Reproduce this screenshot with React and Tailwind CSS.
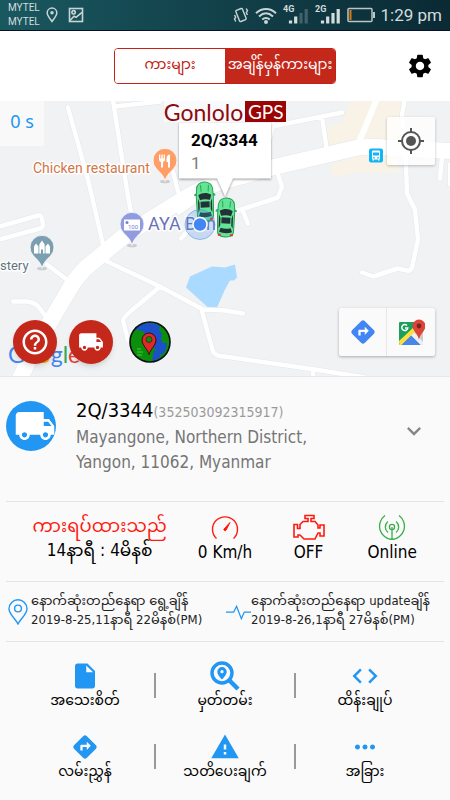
import {
  MdCode,
  MdDirections,
  MdExpandMore,
  MdHelpOutline,
  MdInsertDriveFile,
  MdLocalShipping,
  MdMoreHoriz,
  MdSettings,
  MdWarning,
} from "react-icons/md";

const actions = [
  [
    { label: "အသေးစိတ်", icon: <MdInsertDriveFile className="h-[30px] w-[30px]" /> },
    { label: "မှတ်တမ်း", icon: <SearchPinIcon /> },
    { label: "ထိန်းချုပ်", icon: <MdCode className="h-[30px] w-[30px]" /> },
  ],
  [
    { label: "လမ်းညွှန်", icon: <MdDirections className="h-7 w-7" /> },
    { label: "သတိပေးချက်", icon: <MdWarning className="h-[30px] w-[30px]" /> },
    { label: "အခြား", icon: <MdMoreHoriz className="h-[30px] w-[30px]" /> },
  ],
];

// narrow streets and the main road, drawn twice (casing + fill)
const lanes =
  "M68 108l20 72 12 52 7 30M113 101l14 90 8 44M115 107l45-5M-4 228l42-12q3-1 4 3l1 6q0 3-3 4L-4 241M47 265l21 16M13 302h14q9 1 13 7l10 14M107 262l53 25 43 23 22 1 18 3M160 287l-20 17q-18 14-17 17l5 20M202 312l11 40q3 5 12 5l90 13 50 8M313 372v8M173 172l5 20M272 127l70-14M273 125l-5 20M322 117l5 35M405 99l-3 16 4 50 1 29 8 16 3 30-6 28q-2 4-5 3l-9-2-25 8-11-4M278 175l4 12-4 11-43 14M243 212l5 12M442 158l-2 21M450 165v20M181 239l13-15M193 203l-14 10";
const mainRoad =
  "m17 385 18-37 33-56q6-11 17-23l41-34 55-34q25-16 60-24l31-9 86-20 10-1 90 5";

function SearchPinIcon() {
  return (
    <svg viewBox="0 0 30 30" className="h-[30px] w-[30px]" fill="none" aria-hidden="true">
      <circle cx="12" cy="12" r="10" stroke="currentColor" strokeWidth="3.4" />
      <path d="M19.5 19.5 28 28" stroke="currentColor" strokeWidth="4.4" />
      <path
        fill="currentColor"
        fillRule="evenodd"
        d="M12 6a4.7 4.7 0 0 0-4.7 4.7C7.3 14 12 18.4 12 18.4s4.7-4.4 4.7-7.7A4.7 4.7 0 0 0 12 6Zm0 3.1a1.6 1.6 0 1 1 0 3.2 1.6 1.6 0 0 1 0-3.2Z"
      />
    </svg>
  );
}

function SignalIcon({ label, dim }) {
  return (
    <svg viewBox="0 0 26 22" className="h-[22px] w-[26px]" aria-hidden="true">
      <text x="0" y="8" fontSize="9" fontWeight="700" fontFamily="Roboto, sans-serif" fill="#d3dcde">
        {label}
      </text>
      <path stroke="#d3dcde" strokeWidth="3.2" d="M7.5 19.5v-3M12.7 19.5v-7" />
      <path stroke="#d3dcde" strokeWidth="3.2" opacity={dim ? 0.25 : 1} d="M18 19.5V9M23.2 19.5V5" />
    </svg>
  );
}

function StatusBar() {
  return (
    <div className="flex h-[31px] items-center justify-between border-b border-[#06122b] bg-linear-to-r from-[#1a5860] to-[#0a2a34] px-2 font-['Roboto',sans-serif] text-[#d3dcde]">
      <div className="flex items-center gap-[6px]">
        <div className="text-[10px] leading-[14px]">
          <p>MYTEL</p>
          <p>MYTEL</p>
        </div>
        <svg viewBox="0 0 12 16" className="h-4 w-3" fill="none" stroke="#c9d4d6" strokeWidth="1.5" aria-hidden="true">
          <path d="M6 14.5C4 11.5 1.2 9 1.2 5.8a4.8 4.8 0 0 1 9.6 0c0 3.2-2.8 5.7-4.8 8.7Z" />
          <circle cx="6" cy="5.8" r="1" fill="#c9d4d6" />
        </svg>
        <svg viewBox="0 0 16 16" className="ml-1 h-4 w-4" fill="none" stroke="#c9d4d6" strokeWidth="1.6" aria-hidden="true">
          <rect x="1.5" y="1.5" width="13" height="13" />
          <circle cx="5.6" cy="5.3" r="1.7" />
          <path d="m2 13.5 4-4.2 2 1 6-5" />
        </svg>
      </div>
      <div className="flex items-center gap-[6px]">
        <svg viewBox="0 0 16 18" className="h-[18px] w-4" fill="none" stroke="#c9d4d6" strokeWidth="1.4" aria-hidden="true">
          <rect x="4.5" y="3" width="7" height="12" rx="1" transform="rotate(-22 8 9)" />
          <path d="m1.5 9 1.2 2.2L1.5 13l1.3 2.5M13.2 2.5l1.3 2.3-1.2 1.9L14.5 9" />
        </svg>
        <svg viewBox="0 0 22 17" className="h-[17px] w-[22px]" fill="none" stroke="#c9d4d6" strokeWidth="2" aria-hidden="true">
          <path d="M1 6.2c6-5.6 14-5.6 20 0M4 9.5c4.4-4 9.6-4 14 0M7.2 12.6c2.4-2 5.2-2 7.6 0" />
          <circle cx="11" cy="15" r="1" fill="#c9d4d6" />
        </svg>
        <SignalIcon label="4G" dim />
        <SignalIcon label="2G" />
        <svg viewBox="0 0 28 16" className="h-4 w-7" aria-hidden="true">
          <rect x="1" y="1.5" width="24" height="13" rx="1" fill="none" stroke="#b9c5c8" strokeWidth="1.5" />
          <path fill="#b9c5c8" d="M26 5h2v6h-2z" />
          <path fill="#d9790d" d="M2.5 3h2v10h-2z" />
        </svg>
        <span className="text-[17px] leading-6">1:29 pm</span>
      </div>
    </div>
  );
}

function Header() {
  return (
    <header className="grid h-[70px] grid-cols-[1fr_auto_1fr] items-center bg-white">
      <div className="col-start-2 grid w-[222px] grid-cols-2 overflow-hidden rounded border border-[#c62116] text-[14px] leading-[30px]">
        <button className="h-[34px] bg-white pb-1 text-[#c01a10]">ကားများ</button>
        <button className="h-[34px] bg-[#c4281b] pb-1 whitespace-nowrap text-white">အချိန်မှန်ကားများ</button>
      </div>
      <button aria-label="Settings" className="mr-4 justify-self-end">
        <MdSettings className="h-7 w-7 text-black" />
      </button>
    </header>
  );
}

function Car({ x, y, angle }) {
  return (
    <g transform={`translate(${x} ${y}) rotate(${angle})`}>
      <path fill="#2fae60" d="M-10.5-7.5-7-9v3l-3.5.5ZM10.5-7.5 7-9v3l3.5.5Z" />
      <path
        fill="#62e595"
        stroke="#2c9c57"
        strokeWidth="1"
        d="M-8-13c0-4 4-6.5 8-6.5s8 2.5 8 6.5l.5 8L8 14c0 4-3 5.5-8 5.5S-8 18-8 14l-.5-19Z"
      />
      <path fill="#243238" d="M-6.5-6.5c4-2.5 9-2.5 13 0L5-1.5c-3-1-7-1-10 0Z" />
      <path fill="#243238" d="M-7-3-5.5 1v7L-7 11ZM7-3 5.5 1v7L7 11ZM-4.5 0h9v6h-9ZM-5 10.5c3 1 7 1 10 0l1.5 4c-4 1.500-9 1.500-13 0Z" />
      <path fill="none" stroke="#2fa35b" d="M-4-16.500-3.500-10M4-16.500 3.500-10" />
      <path stroke="#d83a2c" strokeWidth="2" d="M-7.500 17.500h3M4.500 17.500h3" />
    </g>
  );
}

function MapPin({ x, y, color, children }) {
  return (
    <g transform={`translate(${x} ${y})`}>
      <ellipse cy="21" rx="5" ry="1.8" fill="#c9ccd0" />
      <path fill={color} stroke="#fff" strokeWidth=".8" d="M0 21C-1.500 14-6 11.500-8.800 8A12 12 0 1 1 8.800 8C6 11.500 1.500 14 0 21Z" />
      {children}
    </g>
  );
}

function MapCanvas() {
  return (
    <svg
      viewBox="0 101 450 276"
      preserveAspectRatio="xMidYMid slice"
      className="h-full w-full bg-[#f1f2f4]"
      fontFamily="Roboto, sans-serif"
      role="img"
      aria-label="Map"
    >
      <path fill="#f8f3e6" d="M351 101h53l-1 45-45-4-30 8-1-22 15-5ZM330 165l28-9h40v17h-40l-25 5Z" />
      <path fill="#aadaff" d="m190 277 22-10 13 1 10-3 2 13-3 3h-4l-5 9-8 18h-9l-22-20Z" />

      <g fill="none" strokeLinecap="round" strokeLinejoin="round">
        <path d={lanes} stroke="#e4e6e9" strokeWidth="5.5" />
        <path d={mainRoad} stroke="#e4e6e9" strokeWidth="17" />
        <path d={lanes} stroke="#fff" strokeWidth="4.5" />
        <path d="m377 99-19 46" stroke="#fff" strokeWidth="6" />
        <path d={mainRoad} stroke="#fff" strokeWidth="16" />
      </g>

      {/* places */}
      <g stroke="#fff" strokeWidth="3" paintOrder="stroke" strokeLinejoin="round">
        <text x="33" y="173" fontSize="14" fill="#d27749">Chicken restaurant</text>
        <text x="0" y="270" fontSize="13" fill="#60747f">stery</text>
        <text x="148" y="230" fontSize="18" fill="#6a73b7">AYA Bank</text>
      </g>
      <MapPin x={165} y={161} color="#ff9e67">
        <path fill="#fff" d="M-6-6h1.300v4h1V-6h1.400v4h1V-6H0v5q0 2-2 2.500V7h-2V1.500Q-6 1-6-1ZM5-6V7H3V1.500H1.500V-2Q2-6 5-6Z" />
      </MapPin>
      <MapPin x={132} y={225} color="#909be0">
        <rect x="-8" y="-5" width="16" height="11" fill="#fff" />
        <circle cx="-5" cy="-2" r="1.5" fill="#7781d0" />
        <text x="-4" y="4" fontSize="6" fill="#7781d0">100</text>
      </MapPin>
      <MapPin x={42} y={248} color="#7b9eb0">
        <path fill="#fff" d="M-8 6V-1l2-3 2.500 3V6ZM8 6V-1L6-4 3.500-1V6ZM-2.700 6v-9L0-7l2.700 4v9H1V2h-2v4Z" />
      </MapPin>
      <g transform="translate(369 149)">
        <rect width="14" height="14" rx="2" fill="#12b5f5" />
        <path fill="#fff" fillRule="evenodd" d="M4 2h6q1 0 1 1v7l-.5.500V12H9v-1H5v1H3.500v-1.500L3 10V3q0-1 1-1Zm0 2v3h6V4ZM4.200 8.500V10h1.500V8.500Zm4.100 0V10h1.500V8.500Z" />
      </g>

      <Car x={205} y={202} angle={-2} />
      <circle cx="200" cy="225" r="15" fill="#4a90e2" fillOpacity=".25" stroke="#4a90e2" strokeOpacity=".55" />
      <circle cx="200" cy="225" r="7" fill="#4285f4" stroke="#fff" strokeWidth="1.5" />
      <Car x={226} y={218} angle={2} />

      {/* marker bubble */}
      <path fill="#fff" className="drop-shadow-[0_1px_1px_rgb(0_0_0/0.4)]" d="M179 123h92v56h-38l-8 18-8-18h-38Z" />
      <text x="191" y="146" fontSize="17" fontWeight="700" fill="#000">2Q/3344</text>
      <text x="191" y="169" fontSize="17" fill="#7d7d7d">1</text>
    </svg>
  );
}

function Globe() {
  return (
    <svg viewBox="0 0 42 42" className="h-[42px] w-[42px]" aria-hidden="true">
      <circle cx="21" cy="21" r="20" fill="#0b8f0b" />
      <path fill="#1c4fc9" d="M10 5Q20-1 31 5l-1 4 3 4-1 5 2 4h4q0 7-5 12l-5-4-5-6-5-6-4-8-7-1-1-3Z" />
      <path fill="#1c4fc9" d="m25 29 5 2 2 5q-4 3-9 4Z" />
      <path stroke="#43c943" strokeWidth="1" d="M8 28h4M8 31h6M8 34h5" />
      <circle cx="21" cy="21" r="20" fill="none" stroke="#0a0f14" strokeWidth="1.6" />
      <path
        fill="#e0282b"
        stroke="#3b0a0a"
        strokeWidth="1"
        d="M20 33.500c-1-5-7-9-7-14.500a7 7 0 0 1 14 0c0 5.500-6 9.500-7 14.500Z"
      />
      <circle cx="20" cy="18.5" r="3" fill="#0b8f0b" stroke="#3b0a0a" strokeWidth=".6" />
    </svg>
  );
}

function GoogleMapsIcon() {
  return (
    <svg viewBox="0 0 28 28" className="h-7 w-7" aria-hidden="true">
      <path fill="#1a9f5c" d="M3 4h19v6L3 27q-1-1-1-2V5q0-1 1-1Z" />
      <path fill="#c9cbce" d="M22 8 16 14l9 13q1-1 1-2V8Z" />
      <path fill="#4a86e8" d="m14 17 10 10H4Z" />
      <path fill="#f0f0f0" d="m14 17 3-3 9 10v2l-2 1Z" />
      <path fill="#ffdf3d" d="M2 23 17 9l3 3L4 27q-2 0-2-4Z" />
      <path fill="none" stroke="#fff" strokeWidth="1.5" d="M10 7.500a3 3 0 1 0 .8 2.500H8" />
      <path fill="#db4437" d="M22 22c-.5-6-6.500-9-6.500-14a6.500 6.500 0 0 1 13 0c0 5-6 8-6.500 14Z" />
      <circle cx="22" cy="8" r="2.4" fill="#7b231c" />
    </svg>
  );
}

function MapSection() {
  return (
    <section className="relative h-[276px] border-b border-gray-200 font-['Roboto',sans-serif]">
      <MapCanvas />
      <div className="absolute top-0 left-0 flex h-[45px] w-11 items-center justify-center bg-[#fafafa]/90 pb-1 font-['Noto_Sans',sans-serif] text-[18px] text-[#2196f3]">
        0 s
      </div>
      <div className="absolute inset-x-0 top-0 flex justify-center">
        <div className="flex h-[21px] items-center gap-[2px] bg-white/60 font-['Lato',sans-serif] text-[23px] leading-7 text-[#8f0a0d]">
          <span>Gonlolo</span>
          <span className="flex h-[21px] w-[41px] items-center justify-center bg-[#990505] text-[19px] text-white">GPS</span>
        </div>
      </div>
      <button
        aria-label="My location"
        className="absolute top-4 right-[15px] flex h-12 w-12 items-center justify-center rounded-xs bg-white/80 shadow-[0_1px_3px_rgb(0_0_0/0.25)]"
      >
        <svg viewBox="0 0 26 26" className="h-[26px] w-[26px]" fill="none" stroke="#555" strokeWidth="2" aria-hidden="true">
          <circle cx="13" cy="13" r="9" />
          <circle cx="13" cy="13" r="5" fill="#555" stroke="none" />
          <path d="M13 0v4M13 22v4M0 13h4M22 13h4" />
        </svg>
      </button>
      <div className="absolute right-[15px] bottom-5 flex divide-x divide-gray-200 rounded-xs bg-[#fafafa] shadow-[0_1px_3px_rgb(0_0_0/0.3)]">
        <button aria-label="Directions" className="flex h-12 w-12 items-center justify-center">
          <MdDirections className="h-7 w-7 text-[#4285f4]" />
        </button>
        <button aria-label="Open in Google Maps" className="flex h-12 w-12 items-center justify-center">
          <GoogleMapsIcon />
        </button>
      </div>
      <p className="absolute bottom-2 left-2 font-['Lato',sans-serif] text-[23px] leading-7 text-[#4285f4]">
        G<span className="text-[#ea4335]">o</span>
        <span className="text-[#fbbc05]">o</span>g<span className="text-[#34a853]">l</span>
        <span className="text-[#ea4335]">e</span>
      </p>
      <div className="absolute bottom-3 left-[13px] flex items-center gap-3">
        <button aria-label="Help" className="flex h-11 w-11 items-center justify-center rounded-full bg-[#c4281b] shadow-md">
          <MdHelpOutline className="h-[30px] w-[30px] text-white" />
        </button>
        <button aria-label="Vehicles" className="flex h-11 w-11 items-center justify-center rounded-full bg-[#c4281b] shadow-md">
          <MdLocalShipping className="h-[26px] w-[26px] text-white" />
        </button>
        <button aria-label="Map type" className="ml-1">
          <Globe />
        </button>
      </div>
    </section>
  );
}

function VehicleInfo() {
  return (
    <section className="flex h-[124px] items-start gap-5 px-[6px] pt-5">
      <div className="mt-1 flex h-[50px] w-[50px] shrink-0 items-center justify-center rounded-full bg-[#2196f3]">
        <MdLocalShipping className="ml-2 h-[42px] w-[42px] text-white" />
      </div>
      <div className="flex-1">
        <h1 className="text-[20px] leading-[26px] text-black">
          2Q/3344<span className="text-[14px] text-[#9a9a9a]">(352503092315917)</span>
        </h1>
        <p className="max-w-[260px] text-[17px] leading-[25px] text-[#757575]">
          Mayangone, Northern District, Yangon, 11062, Myanmar
        </p>
      </div>
      <button aria-label="Show more" className="mt-5 mr-4">
        <MdExpandMore className="h-7 w-7 text-[#888]" />
      </button>
    </section>
  );
}

function Stats() {
  return (
    <section className="mx-[6px] grid h-20 grid-cols-5 border-t border-[#e4e4e4] px-[10px] pt-3 text-center text-[17px] leading-[24px] text-black">
      <div className="col-span-2">
        <p className="text-[18px] text-[#ff1a10]">ကားရပ်ထားသည်</p>
        <p>14နာရီ : 4မိနစ်</p>
      </div>
      <div className="flex flex-col items-center">
        <svg viewBox="0 0 28 26" className="h-[26px] w-7" fill="none" stroke="#ff1a10" strokeWidth="1.4" aria-hidden="true">
          <path d="M5.5 24.5A12.500 12.500 0 1 1 22.500 24.500" />
          <path fill="#ff1a10" strokeWidth="1" d="m19 8.500-6 6.500a1.200 1.200 0 0 0 2 1.300Z" />
        </svg>
        <p>0 Km/h</p>
      </div>
      <div className="flex flex-col items-center">
        <svg viewBox="0 0 32 26" className="h-[26px] w-8" fill="none" stroke="#ff1a10" strokeWidth="1.6" aria-hidden="true">
          <path d="M12 1.500h9v3h-3v3h4l3 3.500v3h2V11h4v11h-4v-3h-2l-3 6H11l-4-4H5v2H1V10.500h3.500v4H7v-4L10 7.500h5v-3h-3Z" />
        </svg>
        <p>OFF</p>
      </div>
      <div className="flex flex-col items-center">
        <svg viewBox="0 0 28 26" className="h-[26px] w-7" fill="none" stroke="#3cae49" strokeWidth="1.3" aria-hidden="true">
          <circle cx="14" cy="13" r="2.6" />
          <path d="M14 13v12.500M10 18.500a7 7 0 0 1 0-11M18 18.500a7 7 0 0 0 0-11M7 1.500a13.300 13.300 0 0 0 7 24 13.300 13.300 0 0 0 7-24" />
        </svg>
        <p>Online</p>
      </div>
    </section>
  );
}

function Times() {
  return (
    <section className="mx-[6px] flex h-[60px] items-center border-t border-[#e4e4e4] text-[13px] leading-[19px] whitespace-nowrap text-[#222]">
      <div className="flex flex-1 items-center gap-[3px] pl-[2px]">
        <svg viewBox="0 0 20 26" className="h-[26px] w-5 shrink-0" fill="none" stroke="#2196f3" strokeWidth="1.4" aria-hidden="true">
          <path d="M10 25C7 19 1 15.500 1 9.800a9 9 0 0 1 18 0C19 15.500 13 19 10 25Z" />
          <circle cx="10" cy="9.5" r="3.4" />
        </svg>
        <div className="pb-1">
          <p>နောက်ဆုံးတည်နေရာ ရွေ့ချိန်</p>
          <p>2019-8-25,11နာရီ 22မိနစ်(PM)</p>
        </div>
      </div>
      <div className="flex flex-1 items-center">
        <svg viewBox="0 0 26 16" className="h-4 w-[25px] shrink-0" fill="none" stroke="#2196f3" strokeWidth="1.3" aria-hidden="true">
          <path d="M0 8h8l3-6 5 13 3-7h7" />
        </svg>
        <div className="pb-1">
          <p>နောက်ဆုံးတည်နေရာ updateချိန်</p>
          <p>2019-8-26,1နာရီ 27မိနစ်(PM)</p>
        </div>
      </div>
    </section>
  );
}

function Actions() {
  return (
    <nav className="mx-[6px] border-t border-[#e4e4e4] px-[9px] pt-[19px]">
      {actions.map((row, i) => (
        <div key={i} className="grid h-[71px] grid-cols-3 items-start">
          {row.map((action, j) => (
            <div key={action.label} className="relative">
              <button className="flex w-full flex-col items-center text-[14px] leading-[18px] text-black">
                <span className="flex h-[30px] items-center text-[#2196f3]">{action.icon}</span>
                {action.label}
              </button>
              {j < 2 && <span className="absolute top-3 -right-px h-[25px] w-[2px] bg-[#999]" />}
            </div>
          ))}
        </div>
      ))}
    </nav>
  );
}

export default function App() {
  return (
    <div className="min-h-screen bg-[#fafafa] font-['DejaVu_Sans_Condensed','Noto_Sans_Myanmar','Noto_Sans',sans-serif]">
      <StatusBar />
      <Header />
      <MapSection />
      <VehicleInfo />
      <Stats />
      <Times />
      <Actions />
    </div>
  );
}
